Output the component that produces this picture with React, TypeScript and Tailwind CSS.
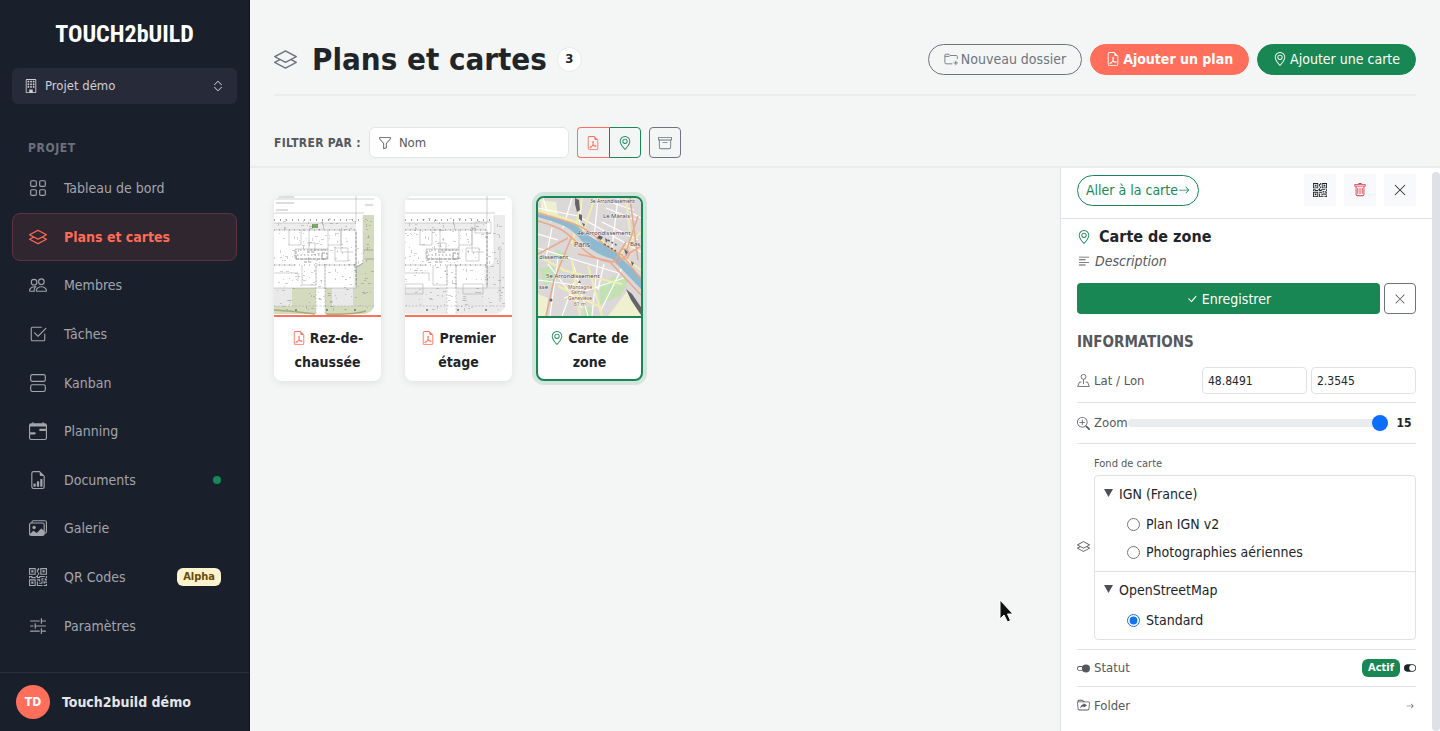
import React, { useState } from 'react';
import clsx from 'clsx';
import {
  BsArchive,
  BsArrowRight,
  BsBuilding,
  BsCalendarRange,
  BsCheck2Square,
  BsCheckLg,
  BsChevronExpand,
  BsFileEarmarkBarGraph,
  BsFileEarmarkPdf,
  BsFolderSymlink,
  BsFunnel,
  BsGeoAlt,
  BsGrid,
  BsImages,
  BsLayers,
  BsPeople,
  BsQrCode,
  BsTextLeft,
  BsToggle2On,
  BsToggleOn,
  BsTrash,
  BsViewStacked,
  BsXLg,
  BsZoomIn,
} from 'react-icons/bs';

interface IconProps {
  className?: string;
}

interface NavItem {
  label: string;
  icon: React.ComponentType<IconProps>;
  active?: boolean;
  dot?: boolean;
  tag?: string;
}

// Icons that the bootstrap set does not have in this shape
function SettingsIcon({ className }: IconProps) {
  return (
    <svg viewBox="0 0 16 16" className={className} fill="none" stroke="currentColor" aria-hidden="true">
      <path d="M1 3.500h8.500M11 3.500h4M11 1v5M1 8h3M5.500 8H15M5.500 5.500v5M1 12.500h8.500M11 12.500h4M11 10v5" />
    </svg>
  );
}

function LocationIcon({ className }: IconProps) {
  return (
    <svg viewBox="0 0 16 16" className={className} fill="none" stroke="currentColor" aria-hidden="true">
      <circle cx="8" cy="3.500" r="3" />
      <path d="M8 6.500v6M5.500 10H3L.8 15.300h14.400L13 10h-2.500" strokeLinejoin="round" />
    </svg>
  );
}

function NewFolderIcon({ className }: IconProps) {
  return (
    <svg viewBox="0 0 16 16" className={className} fill="none" stroke="currentColor" aria-hidden="true">
      <path d="M9.500 13.500H2.300A1.300 1.300 0 0 1 1 12.200V3.500l.5-1h4L7 4h7a1.200 1.200 0 0 1 1.200 1.200V8M1 5h5l1-1M13.500 10v5M11 12.500h5" />
    </svg>
  );
}

const NAV: NavItem[] = [
  { label: 'Tableau de bord', icon: BsGrid },
  { label: 'Plans et cartes', icon: BsLayers, active: true },
  { label: 'Membres', icon: BsPeople },
  { label: 'Tâches', icon: BsCheck2Square },
  { label: 'Kanban', icon: BsViewStacked },
  { label: 'Planning', icon: BsCalendarRange },
  { label: 'Documents', icon: BsFileEarmarkBarGraph, dot: true },
  { label: 'Galerie', icon: BsImages },
  { label: 'QR Codes', icon: BsQrCode, tag: 'Alpha' },
  { label: 'Paramètres', icon: SettingsIcon },
];

// Small repeatable scatter used for the dimension marks on the plans
function scatter(count: number, seed: number) {
  const marks: { x: number; y: number; w: number }[] = [];
  let s = seed;
  for (let i = 0; i < count; i++) {
    s = (s * 16807) % 2147483647;
    const x = s % 98;
    s = (s * 16807) % 2147483647;
    const y = 22 + (s % 92);
    s = (s * 16807) % 2147483647;
    marks.push({ x, y, w: 1 + (s % 3) });
  }
  return marks;
}

function FloorPlan({ green }: { green?: boolean }) {
  const zone = green ? '#d3dabd' : '#ececec';
  return (
    <svg viewBox="0 0 107 119" className="block w-full bg-white" aria-hidden="true">
      <path d="M89 19h11v92q-2 5-9 7H0v-9h18V92h24v26h9V92h31V70l7-3z" fill={zone} />
      <path d="M0 92h18v18H0zM58 92h21v18H58z" fill="#e9e9e9" />
      <path d="M0 27h82v7H0z" fill="#ededed" />
      <path d="M42 74h9v45h-9z" fill="#fff" />
      {green && <path d="M38 28h6v4h-6z" fill="#7fa565" />}
      {green && <path d="M0 114q20 1 41 4M52 118q26 1 40-3" stroke="#9fae7a" strokeWidth="1.5" fill="none" />}
      <g fill="none" stroke="#a3a3a3" strokeWidth=".5">
        <path d="M0 3h100M0 17h90M0 27h82M0 34h82V92H0M82 0v27M15 34v15h12V34M35 34v20h19V34M54 49h13V34M67 34v22h12" />
        <path d="M0 69h22M28 69v20h14V69h9v23M51 69h31M21 53h33v10H21zM61 52h13v13H61zM0 77h24v8M33 47h8v8" />
        <path d="M0 110h100M42 70v48M51 70v48" strokeDasharray="2 1.5" />
        <path d="M0 24h88" strokeDasharray="1 5" strokeWidth="2" />
        <path d="M89 19v50l-9 5v18h20" stroke="#cfcfcf" />
        {green ? (
          <path d="M4 1h16M2 7h18M2 14h12M91 9h8M90 54h9M91 63h9M83 71l6-4" stroke="#777" strokeWidth=".5" />
        ) : (
          <path d="M70 26h16v11H70zM0 88h18v10H0zM58 88h20v10H58zM95 50v56" />
        )}
      </g>
      <g stroke="#777" strokeWidth=".9" fill="none" opacity=".8">
        <path d="M22 62V53M22 63h30M33 56h8M48 57h5v6h-5zM30 66h8M82 36v55" strokeDasharray="3 1.2" />
        <path d="M0 69h82M0 34h82" strokeDasharray="1 4" />
        <path d="M26 54h26M23 59h28" strokeDasharray="1.5 2" />
      </g>
      <g fill="#666" opacity=".5">
        {scatter(150, green ? 77 : 4211).map((m, i) => (
          <rect key={i} x={m.x} y={m.y} width={m.w} height=".6" />
        ))}
        {scatter(60, 951).map((m, i) => (
          <rect key={i} x={m.x} y={m.y} width=".6" height={m.w} />
        ))}
      </g>
      <g fill="#666">
        <circle cx="22" cy="114" r=".9" />
        <circle cx="53" cy="114" r=".9" />
        <circle cx="81" cy="114" r=".9" />
      </g>
    </svg>
  );
}

function ParisMap() {
  return (
    <svg viewBox="0 0 103 118" className="block w-full" aria-hidden="true">
      <rect width="103" height="118" fill="#dcd8d8" />
      <path d="M62 88l14-10 16 4-10 16-20 8zM2 70l14-2 2 14-12 6zM18 52l12 4-4 8-12-4zM46 108l10 2-2 8h-8z" fill="#c3e2b4" />
      <path d="M70 118l20-26 13 16v10zM0 96l10 4-2 18H0zM2 2l16 2 2 14L4 14z" fill="#eef0cf" />
      <g fill="none" stroke="#fff" strokeWidth="1.2">
        <path d="M0 10l40 8 63 36M5 0l8 24M34 0l-9 30M0 50l44 14 40 12M20 60l-8 58M34 62l16 56M60 60l-6 58M80 0l-6 50M60 0l-4 40M92 14l11 6M0 82l60 8M26 100l60-20M14 30l-6 30M38 80l-14 38M0 36l20 6" />
        <path d="M44 0l-3 26M68 10l30 12M64 24l36 18M66 66l-6 26M84 70l-22 44M10 66l34 44M72 4l24 8" />
      </g>
      <g fill="none" stroke="#eeeeae" strokeWidth="2">
        <path d="M0 12l38 12 65 48M44 0L34 46M57 0L44 36M88 0l6 52M34 62l8 56M24 72l60 14M64 118l-14-50M0 58l26 14M103 34L76 62M20 88l44 22" />
      </g>
      <path d="M0 19q14 4 24 8t20 16 30 18l29 30v-12L82 59q-4-8-18-14T38 27Q22 20 0 16z" fill="#8fb9cf" />
      <g fill="none" stroke="#e9a98a" strokeWidth="1.500">
        <path d="M0 15q22 6 36 11t24 15 24 16l19 24M0 23q14 4 22 8t20 17 30 16l31 33" />
        <path d="M34 38L16 82l-8 36M30 40l-30 16M40 56l36 8 12-20M100 18L88 54M92 0l8 62M78 66l12-10 13-8" />
        <circle cx="86" cy="56" r="5" />
      </g>
      <g fill="#63636c">
        <path d="M37 0l4 2 1 10-3 2-2-8zM41 16l3 1v6l-3-2zM44 25l3 1-1 3zM61 37l4 2-2 3-4-2zM67 40l3 2-2 3zM86 51l4 3-2 3zM93 63l3 2-2 3zM88 91l6 5 9 13v8L93 102z" />
        <path d="M70 42l10 6M66 46l12 7" stroke="#63636c" strokeWidth="1.500" strokeDasharray="2 2" fill="none" />
        <circle cx="13" cy="102" r="1.500" />
      </g>
      <g className="font-['Noto_Sans',sans-serif] text-[6px]" fill="#4b4350" stroke="#fff" strokeWidth=".9" strokeOpacity=".7" paintOrder="stroke">
        <text x="52" y="5" className="text-[5px]">3e Arrondissement</text>
        <text x="65" y="20">Le Marais</text>
        <text x="39" y="37">4e Arrondissement</text>
        <text x="92" y="48">Bas</text>
        <text x="1" y="61">dissement</text>
        <text x="8" y="80">5e Arrondissement</text>
        <text x="1" y="91">sse</text>
        <text x="36" y="49" className="text-[7px]">Paris</text>
        <g className="text-[5px]" fill="#8a5a36">
          <text x="39" y="85">▲</text>
          <text x="30" y="91">Montagne</text>
          <text x="33" y="96">Sainte-</text>
          <text x="30" y="102">Geneviève</text>
          <text x="36" y="108">61 m</text>
        </g>
      </g>
    </svg>
  );
}

function Sidebar() {
  return (
    <aside className="flex w-[250px] shrink-0 flex-col border-r border-[#10131c] bg-[#1a1f2c] text-[#a3a5ab]">
      <div className="flex h-[68px] items-center justify-center font-['Roboto_Condensed','Liberation_Sans_Narrow',sans-serif] text-2xl leading-none font-bold text-white">
        TOUCH2bUILD
      </div>
      <div className="relative mx-3 flex h-9 items-center rounded-md bg-[#272a38] text-[#cfd0d4]">
        <BsBuilding className="absolute left-3 size-[14px]" />
        <select aria-label="Projet" className="h-full w-full appearance-none bg-transparent pl-[33px] text-[13px] outline-none">
          <option>Projet démo</option>
        </select>
        <BsChevronExpand className="pointer-events-none absolute right-3 size-[14px]" />
      </div>
      <nav className="flex flex-1 flex-col px-3 pt-9 pb-[22px]">
        <h2 className="mb-2 px-4 text-xs leading-4 font-bold tracking-wider text-[#6d707b]">PROJET</h2>
        <ul className="flex flex-1 flex-col">
          {NAV.map(({ label, icon: Icon, active, dot, tag }) => (
            <li key={label} className="flex flex-1">
              <a
                href="#"
                className={clsx(
                  'flex flex-1 items-center gap-[17px] rounded-lg border px-4 text-sm',
                  active ? 'border-[#5e343c] bg-[#30262f] font-bold text-[#ff6b57]' : 'border-transparent',
                )}
              >
                <Icon className="size-[18px]" />
                <span>{label}</span>
                {dot && <span className="-mr-px ml-auto size-2 rounded-full bg-[#198754]" />}
                {tag && (
                  <span className="-mr-px ml-auto rounded-md bg-[#fff3cd] px-[6px] text-[11px] leading-[18px] font-bold text-[#664d03]">
                    {tag}
                  </span>
                )}
              </a>
            </li>
          ))}
        </ul>
      </nav>
      <div className="flex h-[59px] items-center gap-3 border-t border-[#2b303e] px-4">
        <span className="flex size-[34px] items-center justify-center rounded-full bg-[#ff6f5b] text-xs font-bold text-white">TD</span>
        <span className="text-sm font-bold text-[#e4e5e8]">Touch2build démo</span>
      </div>
    </aside>
  );
}

function PageHeader() {
  const pill = 'flex h-[31px] items-center gap-[3px] rounded-full border px-[15px] text-sm';
  return (
    <header className="mx-6 flex h-24 items-center border-b-2 border-[#e9ecec] pt-6">
      <BsLayers className="mr-[15px] size-[23px] text-[#6c757d]" />
      <h1 className="text-[31px] leading-10 font-bold text-[#212529]">Plans et cartes</h1>
      <span className="ml-[10px] flex size-[25px] items-center justify-center rounded-full border border-[#e6e9ec] bg-white text-[13px] font-bold text-[#212529]">
        3
      </span>
      <div className="ml-auto flex gap-2">
        <button className={clsx(pill, 'border-[#6c757d] text-[#6c757d]')}>
          <NewFolderIcon className="size-[14px]" />
          Nouveau dossier
        </button>
        <button className={clsx(pill, 'border-[#ff6f5b] bg-[#ff6f5b] font-bold text-white')}>
          <BsFileEarmarkPdf className="size-[14px]" />
          Ajouter un plan
        </button>
        <button className={clsx(pill, 'border-[#198754] bg-[#198754] text-white')}>
          <BsGeoAlt className="size-[14px]" />
          Ajouter une carte
        </button>
      </div>
    </header>
  );
}

function FilterBar() {
  return (
    <div className="flex items-center gap-2 border-b-2 border-[#e9ecec] px-6 pt-[31px] pb-2">
      <label htmlFor="filter-name" className="text-xs font-bold tracking-wide text-[#55585c]">
        FILTRER PAR :
      </label>
      <div className="relative flex h-[31px] w-[200px] items-center">
        <BsFunnel className="absolute left-[9px] size-[14px] text-[#555]" />
        <input
          id="filter-name"
          placeholder="Nom"
          className="h-full w-full rounded-md border border-[#e3e6e8] bg-white pr-2 pl-[29px] text-[13px] outline-none placeholder:text-[#55585c]"
        />
      </div>
      <div className="flex">
        <button aria-label="Plans" className="flex h-[31px] w-8 items-center justify-center rounded-l border border-r-0 border-[#ff6f5b] text-[#ff6f5b]">
          <BsFileEarmarkPdf className="size-[14px]" />
        </button>
        <button aria-label="Cartes" className="flex h-[31px] w-8 items-center justify-center rounded-r border border-[#198754] text-[#198754]">
          <BsGeoAlt className="size-[14px]" />
        </button>
      </div>
      <button aria-label="Archives" className="flex h-[31px] w-8 items-center justify-center rounded border border-[#6c757d] text-[#6c757d]">
        <BsArchive className="size-[14px]" />
      </button>
    </div>
  );
}

interface CardProps {
  title: string;
  map?: boolean;
  children: React.ReactNode;
}

function Card({ title, map, children }: CardProps) {
  const Icon = map ? BsGeoAlt : BsFileEarmarkPdf;
  return (
    <a
      href="#"
      className={clsx(
        'block w-[107px] overflow-hidden rounded-lg bg-white',
        map ? 'border-2 border-[#198754] ring-4 ring-[#d3e5dc]' : 'shadow-[0_2px_8px_rgba(0,0,0,0.08)]',
      )}
    >
      {children}
      <div
        className={clsx(
          'border-t-2 text-center text-sm leading-6 font-bold text-[#212529]',
          map ? 'border-[#198754] px-1 pt-2 pb-[5px]' : 'border-[#ff6f5b] px-3 pt-[9px] pb-[7px]',
        )}
      >
        <Icon className={clsx('mr-1 inline size-[14px] align-[-2px]', map ? 'text-[#198754]' : 'text-[#ff6f5b]')} />
        {title}
      </div>
    </a>
  );
}

function DetailPanel() {
  const [zoom, setZoom] = useState(15);
  const [layer, setLayer] = useState('Standard');
  const groups = [
    { name: 'IGN (France)', layers: ['Plan IGN v2', 'Photographies aériennes'] },
    { name: 'OpenStreetMap', layers: ['Standard'] },
  ];
  const tool = 'flex size-8 items-center justify-center bg-[#f8f9fa]';
  const row = 'flex items-center gap-1 border-b border-[#dee2e6]';

  return (
    <section className="flex w-[380px] shrink-0 border-l border-[#dee2e6] bg-white text-[13px] text-[#55585c]">
      <div className="flex-1">
        <div className="flex h-[51px] items-center gap-2 border-b border-[#dee2e6] px-4 pb-[6px]">
          <a href="#" className="mr-auto flex h-[31px] items-center rounded-full border border-[#198754] px-2 text-sm text-[#198754]">
            Aller à la carte
            <BsArrowRight className="size-3" />
          </a>
          <button aria-label="QR Code" className={clsx(tool, 'text-[#212529]')}>
            <BsQrCode className="size-[14px]" />
          </button>
          <button aria-label="Supprimer" className={clsx(tool, 'text-[#dc3545]')}>
            <BsTrash className="size-[14px]" />
          </button>
          <button aria-label="Fermer" className={clsx(tool, 'text-[#212529]')}>
            <BsXLg className="size-[14px]" />
          </button>
        </div>

        <div className="px-4 pt-[6px]">
          <h2 className="flex h-6 items-center gap-2 text-base font-bold text-[#212529]">
            <BsGeoAlt className="size-[14px] text-[#198754]" />
            Carte de zone
          </h2>
          <p className="flex h-6 items-center gap-1 text-sm italic">
            <BsTextLeft className="size-[14px]" />
            Description
          </p>
          <div className="mt-[10px] flex gap-1">
            <button className="flex h-[31px] flex-1 items-center justify-center gap-1 rounded bg-[#198754] text-sm text-white">
              <BsCheckLg className="size-3" />
              Enregistrer
            </button>
            <button aria-label="Annuler" className="flex h-[31px] w-8 items-center justify-center rounded border border-[#6c757d]">
              <BsXLg className="size-3" />
            </button>
          </div>

          <h3 className="mt-[18px] text-[15px] leading-5 font-bold">INFORMATIONS</h3>

          <div className={clsx(row, 'mt-[7px] h-11')}>
            <LocationIcon className="size-[13px]" />
            <span className="mr-auto">Lat / Lon</span>
            <input
              aria-label="Latitude"
              defaultValue="48.8491"
              className="h-[27px] w-[105px] rounded border border-[#dee2e6] px-[5px] text-xs text-[#212529]"
            />
            <input
              aria-label="Longitude"
              defaultValue="2.3545"
              className="h-[27px] w-[105px] rounded border border-[#dee2e6] px-[5px] text-xs text-[#212529]"
            />
          </div>

          <div className={clsx(row, 'h-[41px]')}>
            <BsZoomIn className="size-[13px]" />
            <label htmlFor="zoom">Zoom</label>
            <input
              id="zoom"
              type="range"
              min={1}
              max={15}
              value={zoom}
              onChange={e => setZoom(Number(e.target.value))}
              className="-ml-1 h-2 min-w-0 flex-1 appearance-none rounded-full bg-[#e9ecef] [&::-webkit-slider-thumb]:size-4 [&::-webkit-slider-thumb]:appearance-none [&::-webkit-slider-thumb]:rounded-full [&::-webkit-slider-thumb]:bg-[#0d6efd]"
            />
            <span className="w-6 text-center text-xs font-bold text-[#212529]">{zoom}</span>
          </div>

          <div className={clsx(row, 'pt-2 pb-[9px]')}>
            <BsLayers className="size-[13px]" />
            <div className="flex-1">
              <p className="py-[3px] text-[11px] leading-[17px]">Fond de carte</p>
              <div className="divide-y divide-[#dee2e6] rounded border border-[#dee2e6]">
                {groups.map(group => (
                  <details key={group.name} open className="px-[9px] pt-1 pb-[5px] text-sm text-[#212529]">
                    <summary className="flex h-7 list-none items-center gap-[6px]">
                      <svg viewBox="0 0 9 8" className="mb-[2px] h-2 w-[9px]" fill="#495057" aria-hidden="true">
                        <path d="M0 0h9L4.500 8z" />
                      </svg>
                      {group.name}
                    </summary>
                    {group.layers.map((name, i) => (
                      <label key={name} className={clsx('ml-[23px] flex h-7 items-center gap-[6px]', i === 0 && 'mt-[2px]')}>
                        <input type="radio" name="layer" checked={layer === name} onChange={() => setLayer(name)} className="size-[13px] accent-[#1473e6]" />
                        {name}
                      </label>
                    ))}
                  </details>
                ))}
              </div>
            </div>
          </div>

          <div className={clsx(row, 'h-[37px]')}>
            <BsToggle2On className="size-[13px]" />
            <span className="mr-auto">Statut</span>
            <span className="rounded-md bg-[#198754] px-[6px] text-[11px] leading-[18px] font-bold text-white">Actif</span>
            <BsToggleOn className="size-3 text-[#212529]" />
          </div>

          <div className="flex h-[37px] items-center gap-1">
            <BsFolderSymlink className="size-[13px]" />
            <span className="mr-auto">Folder</span>
            <BsArrowRight className="mr-[2px] size-2" />
          </div>
        </div>
      </div>
      <div className="mt-1 w-2 rounded-full bg-[#dee2e6]" />
    </section>
  );
}

export default function App() {
  return (
    <div className="relative flex min-h-screen bg-[#f4f6f6] font-['DejaVu_Sans_Condensed','Noto_Sans',sans-serif]">
      <Sidebar />
      <div className="flex min-w-0 flex-1 flex-col">
        <PageHeader />
        <FilterBar />
        <div className="flex flex-1">
          <main className="flex flex-1 flex-wrap content-start items-start gap-6 px-6 pt-7">
            <Card title="Rez-de-chaussée">
              <FloorPlan green />
            </Card>
            <Card title="Premier étage">
              <FloorPlan />
            </Card>
            <Card title="Carte de zone" map>
              <ParisMap />
            </Card>
          </main>
          <DetailPanel />
        </div>
      </div>

      {/* Mouse pointer */}
      <svg viewBox="0 0 16 24" className="pointer-events-none absolute top-[599px] left-[999px] h-6 w-4" aria-hidden="true">
        <path d="M1 1v19l4-4 3.500 7 3-1.500L8.500 15H14z" fill="#111" stroke="#fff" strokeWidth="1" />
      </svg>
    </div>
  );
}
